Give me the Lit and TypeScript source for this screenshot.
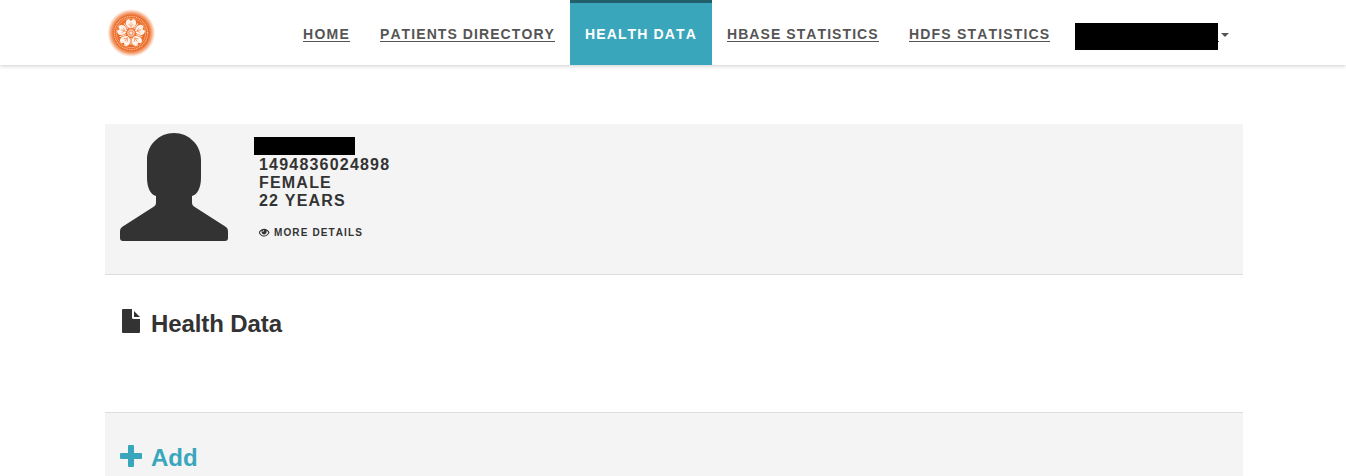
import { LitElement, html, css, svg } from "lit";
import { customElement } from "lit/decorators.js";

const petals = [0, 72, 144, 216, 288];

@customElement("app-root")
export class AppRoot extends LitElement {
  static styles = css`
    :host {
      display: block;
      height: 476px;
      overflow: hidden;
      background: #fff;
      color: #333;
      font-family: "Liberation Sans", Arial, sans-serif;
      font-weight: 700;
      font-kerning: none;
    }
    svg { display: block; flex: none; }
    .header {
      height: 65px;
      box-shadow: 0 1px 4px rgba(0, 0, 0, 0.2);
      background: #fff;
    }
    .bar {
      display: flex;
      width: 1138px;
      height: 65px;
      margin-left: 105px;
    }
    .logo { width: 183px; padding: 7px 0 0 0; box-sizing: border-box; }
    .nav { display: flex; }
    .item {
      box-sizing: border-box;
      height: 65px;
      padding: 24px 0 0 15px;
      font-size: 14px;
      line-height: 20px;
      letter-spacing: 1.12px;
      white-space: nowrap;
      color: #555;
    }
    .label {
      display: inline-block;
      height: 17px;
      border-bottom: 1px solid #555;
    }
    .home { width: 77px; letter-spacing: 1.27px; }
    .patients { width: 205px; letter-spacing: 1.08px; }
    .health { width: 142px; }
    .hbase { width: 182px; letter-spacing: 1.07px; }
    .hdfs { width: 181px; letter-spacing: 1.18px; }
    .active {
      background: #39a6bc;
      border-top: 3px solid #225f6b;
      padding-top: 21px;
      color: #fff;
    }
    .active .label { border: 0; }
    .account { display: flex; padding-top: 23px; }
    .account-name { width: 143px; height: 27px; background: #000; }
    .tail { width: 1px; height: 1px; margin-top: 18px; background: #555; }
    .caret {
      width: 0;
      height: 0;
      margin: 10px 0 0 2px;
      border: 4px solid transparent;
      border-top-color: #555;
      border-bottom: 0;
    }
    .content { width: 1138px; margin: 59px 0 0 105px; }
    .patient {
      display: flex;
      box-sizing: border-box;
      height: 151px;
      padding: 9px 15px 0;
      background: #f4f4f4;
      border-bottom: 1px solid #ddd;
    }
    .details {
      padding-top: 4px;
      margin-left: 26px;
      font-size: 16px;
      line-height: 18px;
      letter-spacing: 1.2px;
    }
    .patient-name { width: 101px; height: 18px; margin-bottom: 1px; background: #000; }
    .line { padding-left: 5px; }
    .more {
      display: flex;
      align-items: center;
      gap: 4px;
      padding: 14px 0 0 5px;
      font-size: 10px;
      letter-spacing: 1.12px;
    }
    .title {
      display: flex;
      box-sizing: border-box;
      height: 137px;
      padding: 34px 0 0 17px;
      font-size: 24px;
      line-height: 30px;
      letter-spacing: -0.1px;
    }
    .title .text { margin-left: 11px; }
    .add {
      display: flex;
      box-sizing: border-box;
      height: 64px;
      padding: 32px 0 0 15px;
      border-top: 1px solid #ddd;
      background: #f4f4f4;
      color: #39a6bc;
      font-size: 24px;
      line-height: 26px;
    }
    .add .text { margin-left: 9px; }
  `;

  private logo() {
    return html`<svg width="52" height="52" viewBox="0 0 52 52">
      <defs>
        <radialGradient id="glow">
          <stop offset="0.74" stop-color="#eb6a26" />
          <stop offset="0.86" stop-color="#f08a52" stop-opacity=".7" />
          <stop offset="1" stop-color="#f6a477" stop-opacity="0" />
        </radialGradient>
      </defs>
      <circle cx="26.3" cy="26" r="24" fill="url(#glow)" />
      <circle cx="26" cy="26" r="16.6" fill="none" stroke="#f8bd99" stroke-width="1.2" stroke-dasharray="1.1 .7" />
      <circle cx="26" cy="26" r="14.8" fill="none" stroke="#f9c4a4" stroke-width=".6" />
      ${petals.map((a) => svg`<g transform="rotate(${a} 26 26)">
        <path d="M25 21.5 C19.5 18.5 19.5 13 24 12 L26 14 L28 12 C32.5 13 32.5 18.5 27 21.5Z" fill="#fff1e7" />
        <path d="M26 22V15.5M23.5 17l2.5 2.5 2.5-2.5" fill="none" stroke="#f08c57" stroke-width=".7" />
        <path d="M26 31V38" stroke="#fde3d2" stroke-width="1" />
      </g>`)}
      <circle cx="26" cy="26" r="4.2" fill="#f9c4a4" stroke="#eb6a26" stroke-width=".8" />
      <circle cx="26" cy="26" r="2" fill="#fde3d2" stroke="#ef783b" stroke-width=".7" />
    </svg>`;
  }

  render() {
    return html`
      <header class="header">
        <div class="bar">
          <div class="logo">${this.logo()}</div>
          <nav class="nav">
            <div class="item home"><span class="label">HOME</span></div>
            <div class="item patients"><span class="label">PATIENTS DIRECTORY</span></div>
            <div class="item health active"><span class="label">HEALTH DATA</span></div>
            <div class="item hbase"><span class="label">HBASE STATISTICS</span></div>
            <div class="item hdfs"><span class="label">HDFS STATISTICS</span></div>
          </nav>
          <div class="account">
            <div class="account-name"></div>
            <div class="tail"></div>
            <div class="caret"></div>
          </div>
        </div>
      </header>
      <main class="content">
        <section class="patient">
          <svg width="108" height="108" viewBox="0 0 108 108" fill="#333">
            <path d="M54 0C69 0 81 12 81 27V45C81 55 77 62 72 63V70Q72 72 74 73.5L106 94Q108 95.5 108 98V105Q108 108 105 108H3Q0 108 0 105V98Q0 95.5 2 94L34 73.5Q36 72 36 70V63C31 62 27 55 27 45V27C27 12 39 0 54 0Z" />
          </svg>
          <div class="details">
            <div class="patient-name"></div>
            <div class="line">1494836024898</div>
            <div class="line">FEMALE</div>
            <div class="line">22 YEARS</div>
            <div class="more">
              <svg width="11" height="10" viewBox="0 0 11 10">
                <path d="M-.4 4.5C2.4-.5 7.8-.5 10.6 4.5C7.8 9.9 2.4 9.9-.4 4.5Z" fill="#333" />
                <path d="M.9 4.7Q1.5 3.4 2.6 2.7C1.8 7.6 8.4 7.6 7.6 2.7Q8.7 3.4 9.3 4.7C7 8.5 3.2 8.5 .9 4.7Z" fill="#f4f4f4" />
                <path d="M3.3 3.9Q3.5 2.1 5.1 2.1L4.7 3.5Z" fill="#f4f4f4" />
              </svg>
              <span>MORE DETAILS</span>
            </div>
          </div>
        </section>
        <section class="title">
          <svg width="18" height="24" viewBox="0 0 18 24" fill="#333">
            <path d="M1 0H10V8.5Q10 10 11.5 10H18V23Q18 24 17 24H1Q0 24 0 23V1Q0 0 1 0ZM12 2L18 8H12Z" />
          </svg>
          <span class="text">Health Data</span>
        </section>
        <section class="add">
          <svg width="22" height="22" viewBox="0 0 22 22" fill="#39a6bc">
            <path d="M9 0H13Q14 0 14 1V8H21Q22 8 22 9V13Q22 14 21 14H14V21Q14 22 13 22H9Q8 22 8 21V14H1Q0 14 0 13V9Q0 8 1 8H8V1Q8 0 9 0Z" />
          </svg>
          <span class="text">Add</span>
        </section>
      </main>
    `;
  }
}
